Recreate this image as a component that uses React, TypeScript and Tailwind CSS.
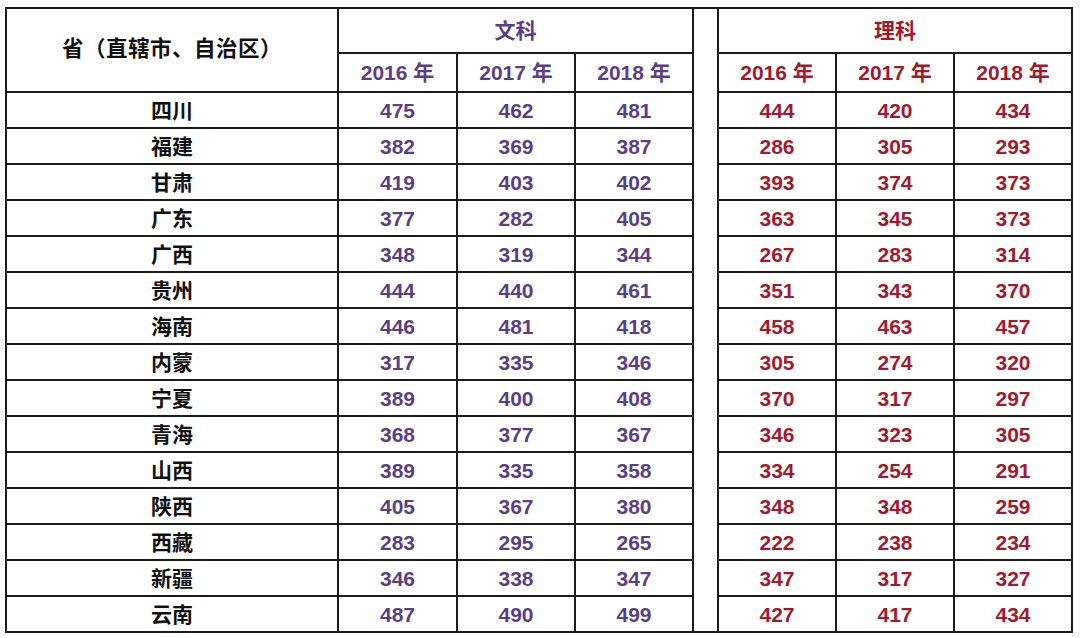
const rows: [string, number[], number[]][] = [
  ['四川', [475, 462, 481], [444, 420, 434]],
  ['福建', [382, 369, 387], [286, 305, 293]],
  ['甘肃', [419, 403, 402], [393, 374, 373]],
  ['广东', [377, 282, 405], [363, 345, 373]],
  ['广西', [348, 319, 344], [267, 283, 314]],
  ['贵州', [444, 440, 461], [351, 343, 370]],
  ['海南', [446, 481, 418], [458, 463, 457]],
  ['内蒙', [317, 335, 346], [305, 274, 320]],
  ['宁夏', [389, 400, 408], [370, 317, 297]],
  ['青海', [368, 377, 367], [346, 323, 305]],
  ['山西', [389, 335, 358], [334, 254, 291]],
  ['陕西', [405, 367, 380], [348, 348, 259]],
  ['西藏', [283, 295, 265], [222, 238, 234]],
  ['新疆', [346, 338, 347], [347, 317, 327]],
  ['云南', [487, 490, 499], [427, 417, 434]],
];

const years = ['2016', '2017', '2018'];

const cell = 'border-2 border-[#1c1c1c] text-center align-middle p-0';
const purple = 'text-[#5b3f86]';
const red = 'text-[#a11a2d]';

export default function App() {
  return (
    <div className="w-[1080px] h-[638px] bg-white overflow-hidden pl-[5px] pt-[7px] font-['Liberation_Sans','Noto_Sans_CJK_SC',sans-serif] font-bold">
      <table className="table-fixed border-collapse w-[1068px] text-[21px] leading-none">
        <colgroup>
          <col className="w-[332px]" />
          <col className="w-[119px]" />
          <col className="w-[118px]" />
          <col className="w-[118px]" />
          <col className="w-[25px]" />
          <col className="w-[118px]" />
          <col className="w-[118px]" />
          <col className="w-[118px]" />
        </colgroup>
        <tbody>
          <tr className="h-[45px]">
            <th rowSpan={2} className={`${cell} text-[#111] text-[21.5px] tracking-[0.5px]`}>
              省（直辖市、自治区）
            </th>
            <th colSpan={3} className={`${cell} ${purple}`}>
              文科
            </th>
            <td rowSpan={17} className="border-2 border-[#1c1c1c] p-0" />
            <th colSpan={3} className={`${cell} ${red}`}>
              理科
            </th>
          </tr>
          <tr className="h-[39px]">
            {years.map((y) => (
              <th key={'w' + y} className={`${cell} ${purple}`}>
                {y} 年
              </th>
            ))}
            {years.map((y) => (
              <th key={'l' + y} className={`${cell} ${red}`}>
                {y} 年
              </th>
            ))}
          </tr>
          {rows.map(([name, wen, li]) => (
            <tr key={name} className="h-[36px]">
              <td className={`${cell} text-[#111]`}>{name}</td>
              {wen.map((v, i) => (
                <td key={'w' + i} className={`${cell} ${purple}`}>
                  {v}
                </td>
              ))}
              {li.map((v, i) => (
                <td key={'l' + i} className={`${cell} ${red}`}>
                  {v}
                </td>
              ))}
            </tr>
          ))}
        </tbody>
      </table>
    </div>
  );
}
